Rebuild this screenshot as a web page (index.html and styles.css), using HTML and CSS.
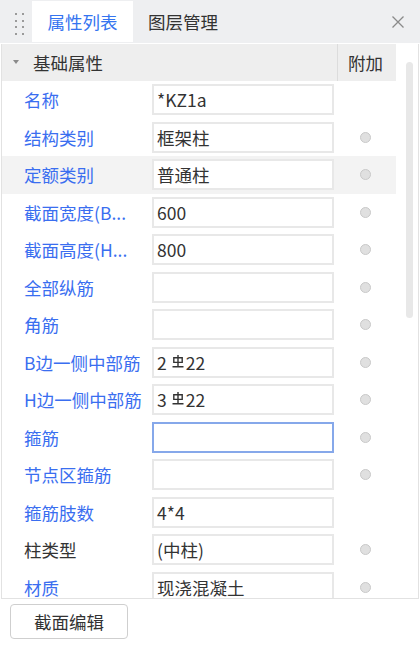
FILE: index.html
```html
<!DOCTYPE html>
<html lang="zh">
<head>
<meta charset="utf-8">
<title>属性列表</title>
<link rel="stylesheet" href="styles.css">
</head>
<body>
<div class="panel">
  <div class="tabbar">
    <div class="grip">
      <span></span><span></span><span></span><span></span>
      <span></span><span></span><span></span><span></span>
    </div>
    <div class="tab active">属性列表</div>
    <div class="tab">图层管理</div>
    <div class="close">
      <svg width="14" height="14" viewBox="0 0 14 14"><path d="M1.5 1.5 L12.5 12.5 M12.5 1.5 L1.5 12.5" stroke="#8a8a8a" stroke-width="1.3" fill="none"/></svg>
    </div>
  </div>
  <div class="body">
    <div class="table">
      <div class="row head">
        <div class="group"><span class="tri"></span>基础属性</div>
        <div class="extra-head">附加</div>
      </div>
      <div class="row"><div class="label">名称</div><div class="cell"><div class="input">*KZ1a</div></div><div class="extra"></div></div>
      <div class="row"><div class="label">结构类别</div><div class="cell"><div class="input">框架柱</div></div><div class="extra"><span class="radio"></span></div></div>
      <div class="row hl"><div class="label">定额类别</div><div class="cell"><div class="input">普通柱</div></div><div class="extra"><span class="radio"></span></div></div>
      <div class="row"><div class="label">截面宽度(B...</div><div class="cell"><div class="input">600</div></div><div class="extra"><span class="radio"></span></div></div>
      <div class="row"><div class="label">截面高度(H...</div><div class="cell"><div class="input">800</div></div><div class="extra"><span class="radio"></span></div></div>
      <div class="row"><div class="label">全部纵筋</div><div class="cell"><div class="input"></div></div><div class="extra"><span class="radio"></span></div></div>
      <div class="row"><div class="label">角筋</div><div class="cell"><div class="input"></div></div><div class="extra"><span class="radio"></span></div></div>
      <div class="row"><div class="label">B边一侧中部筋</div><div class="cell"><div class="input">2<svg class="rebar" width="12" height="13" viewBox="0 0 12 13"><path d="M6 0 V11 M1.8 2.8 H10.2 V7.4 H1.8 Z M0.5 11.8 H11.5" stroke="#333" stroke-width="1.4" fill="none"/></svg>22</div></div><div class="extra"><span class="radio"></span></div></div>
      <div class="row"><div class="label">H边一侧中部筋</div><div class="cell"><div class="input">3<svg class="rebar" width="12" height="13" viewBox="0 0 12 13"><path d="M6 0 V11 M1.8 2.8 H10.2 V7.4 H1.8 Z M0.5 11.8 H11.5" stroke="#333" stroke-width="1.4" fill="none"/></svg>22</div></div><div class="extra"><span class="radio"></span></div></div>
      <div class="row"><div class="label">箍筋</div><div class="cell"><div class="input focus"></div></div><div class="extra"><span class="radio"></span></div></div>
      <div class="row"><div class="label">节点区箍筋</div><div class="cell"><div class="input"></div></div><div class="extra"><span class="radio"></span></div></div>
      <div class="row"><div class="label">箍筋肢数</div><div class="cell"><div class="input">4*4</div></div><div class="extra"></div></div>
      <div class="row"><div class="label dark">柱类型</div><div class="cell"><div class="input">(中柱)</div></div><div class="extra"><span class="radio"></span></div></div>
      <div class="row"><div class="label">材质</div><div class="cell"><div class="input">现浇混凝土</div></div><div class="extra"><span class="radio"></span></div></div>
    </div>
    <div class="scroll"><div class="thumb"></div></div>
  </div>
  <div class="footer">
    <button class="btn">截面编辑</button>
  </div>
</div>
</body>
</html>
```

FILE: styles.css
```css
* { box-sizing: border-box; }
html, body { margin: 0; padding: 0; background: #fff; }
body {
  font-family: "Noto Sans CJK SC", "Noto Sans", sans-serif;
  font-size: 17.5px;
  color: #333;
}
.panel {
  width: 420px;
  height: 645px;
  background: #fff;
  overflow: hidden;
}
.tabbar {
  height: 44px;
  background: #eeeff1;
  border-bottom: 1px solid #fff;
  display: flex;
  align-items: flex-end;
}
.grip {
  width: 32px;
  height: 43px;
  padding: 13px 0 0 15px;
  display: grid;
  grid-template-columns: 2px 2px;
  grid-auto-rows: 2px;
  column-gap: 5px;
  row-gap: 4.5px;
  align-self: flex-start;
}
.grip span { background: #9a9a9a; width: 2px; height: 2px; }
.tab {
  height: 41px;
  display: flex;
  align-items: center;
  justify-content: center;
  padding: 0 15px;
  color: #333;
  line-height: 1;
  margin-bottom: 1px;
}
.tab.active {
  width: 101px;
  background: #fff;
  color: #3574f0;
}
.close {
  margin-left: auto;
  margin-right: 15px;
  height: 43px;
  display: flex;
  align-items: center;
  align-self: flex-start;
}
.close svg { display: block; }
.body {
  height: 555px;
  margin-left: 1px;
  margin-right: 1px;
  border-left: 1px solid #e2e2e2;
  border-right: 1px solid #e2e2e2;
  border-bottom: 1px solid #e2e2e2;
  display: flex;
  overflow: hidden;
}
.table {
  width: 394px;
  flex: none;
}
.row {
  display: grid;
  grid-template-columns: 150px 185px 59px;
  height: 37.5px;
  align-items: center;
}
.row.head {
  height: 37px;
  background: #eeeeee;
  grid-template-columns: 335px 59px;
}
.group {
  display: flex;
  align-items: center;
  padding-left: 31px;
  position: relative;
  height: 100%;
}
.tri {
  position: absolute;
  left: 11px;
  top: 16px;
  width: 0;
  height: 0;
  border-left: 3.5px solid transparent;
  border-right: 3.5px solid transparent;
  border-top: 4px solid #8a8a8a;
}
.extra-head {
  height: 100%;
  border-left: 1px solid #dcdcdc;
  display: flex;
  align-items: center;
  padding-left: 10px;
}
.row.hl { background: #f3f3f3; }
.label {
  padding-left: 22px;
  color: #3a6ef0;
  white-space: nowrap;
  overflow: hidden;
}
.label.dark { color: #333; }
.cell { height: 31px; }
.input {
  width: 182px;
  height: 31px;
  border: 2px solid #e8e8e8;
  background: #fff;
  padding-left: 3px;
  display: flex;
  align-items: center;
  color: #333;
  white-space: nowrap;
}
.input.focus { border-color: #86a8ea; }
.rebar { margin: 0 2px 0 5px; position: relative; top: -1px; }
.extra {
  display: flex;
  align-items: center;
  padding-left: 23px;
}
.radio {
  width: 11px;
  height: 11px;
  border-radius: 50%;
  background: #e0e0e0;
  border: 1px solid #c9c9c9;
}
.scroll {
  flex: 1;
  padding: 18px 0 0 10px;
}
.thumb {
  width: 7px;
  height: 256px;
  background: #e8e8e8;
  border-radius: 4px;
}
.footer {
  padding: 5px 0 0 10px;
}
.btn {
  width: 118px;
  height: 35px;
  border: 1px solid #cfcfcf;
  border-radius: 4px;
  background: #fff;
  font-family: "Noto Sans CJK SC", "Noto Sans", sans-serif;
  font-size: 17.5px;
  color: #333;
  padding: 0;
}
```
